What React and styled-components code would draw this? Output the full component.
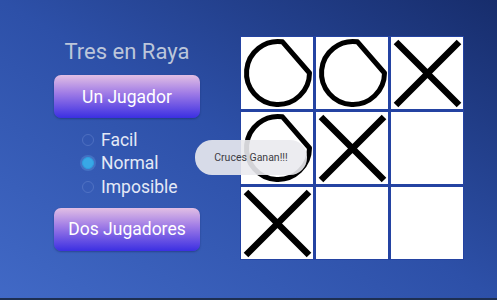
import React from "react";
import styled, { createGlobalStyle } from "styled-components";

const GlobalStyle = createGlobalStyle`
  html, body {
    margin: 0;
    padding: 0;
    width: 100%;
    height: 100%;
  }
  body {
    font-family: Roboto, "Liberation Sans", sans-serif;
  }
`;

const Screen = styled.div`
  position: relative;
  width: 497px;
  height: 300px;
  box-sizing: border-box;
  display: flex;
  align-items: flex-start;
  gap: 40px;
  padding: 36px 0 0 54px;
  background: linear-gradient(to top right, #4169c6 0%, #2d50a8 50%, #172d6c 100%);
  border-bottom: 2px solid #1d2f52;
  overflow: hidden;
`;

const Menu = styled.div`
  width: 146px;
  display: flex;
  flex-direction: column;
`;

const Title = styled.h1`
  margin: 0 0 7px;
  font-size: 22px;
  font-weight: 400;
  line-height: 32px;
  text-align: center;
  color: #bcc6da;
`;

const ModeButton = styled.button`
  height: 43px;
  width: 100%;
  border: none;
  border-radius: 7px;
  font-family: Roboto, "Liberation Sans", sans-serif;
  font-size: 17.5px;
  color: #ffffff;
  background: linear-gradient(to bottom, #e2bfe4 0%, #a07ce6 42%, #3b2fe2 100%);
  box-shadow: 0 1px 2px rgba(10, 20, 60, 0.35);
  cursor: pointer;
`;

const Levels = styled.div`
  display: flex;
  flex-direction: column;
  margin: 10px 0 9px;
  padding-left: 28px;
`;

const Level = styled.label`
  display: flex;
  align-items: center;
  gap: 7px;
  height: 23.5px;
  font-size: 17.5px;
  color: #e4e9f6;
`;

const Dot = styled.span`
  width: 12px;
  height: 12px;
  border-radius: 50%;
  box-sizing: border-box;
  border: 1px solid ${(p) => (p.$on ? "#2e9fe0" : "rgba(110,140,210,0.45)")};
  background: ${(p) => (p.$on ? "#38a8e6" : "transparent")};
  box-shadow: ${(p) => (p.$on ? "0 0 0 2px rgba(90,150,220,0.4)" : "none")};
`;

const Board = styled.div`
  display: grid;
  grid-template-columns: repeat(3, 72px);
  grid-template-rows: repeat(3, 72px);
  gap: 3px;
  padding: 1px;
  background: #2443a2;
`;

const Cell = styled.div`
  background: #ffffff;
  display: flex;
`;

const Toast = styled.div`
  position: absolute;
  left: 195px;
  top: 140px;
  width: 112px;
  height: 35px;
  border-radius: 17px;
  background: rgba(234, 234, 238, 0.9);
  display: flex;
  align-items: center;
  justify-content: center;
  font-size: 10.5px;
  color: #3c3c44;
`;

const Nought = () => (
  <svg width="72" height="72" viewBox="0 0 72 72">
    <path
      d="M68.5 36 A31.5 31.5 0 1 1 41.5 4.8 Z"
      fill="none"
      stroke="#000"
      strokeWidth="5"
      strokeLinejoin="round"
    />
  </svg>
);

const Cross = () => (
  <svg width="72" height="72" viewBox="0 0 72 72">
    <path d="M5 5 L68 68 M68 5 L5 68" stroke="#000" strokeWidth="6.5" />
  </svg>
);

const board = ["O", "O", "X", "O", "X", "", "X", "", ""];

export default function App() {
  return (
    <>
      <GlobalStyle />
      <Screen>
        <Menu>
          <Title>Tres en Raya</Title>
          <ModeButton>Un Jugador</ModeButton>
          <Levels>
            <Level><Dot />Facil</Level>
            <Level><Dot $on />Normal</Level>
            <Level><Dot />Imposible</Level>
          </Levels>
          <ModeButton>Dos Jugadores</ModeButton>
        </Menu>
        <Board>
          {board.map((v, i) => (
            <Cell key={i}>
              {v === "O" && <Nought />}
              {v === "X" && <Cross />}
            </Cell>
          ))}
        </Board>
        <Toast>Cruces Ganan!!!</Toast>
      </Screen>
    </>
  );
}
